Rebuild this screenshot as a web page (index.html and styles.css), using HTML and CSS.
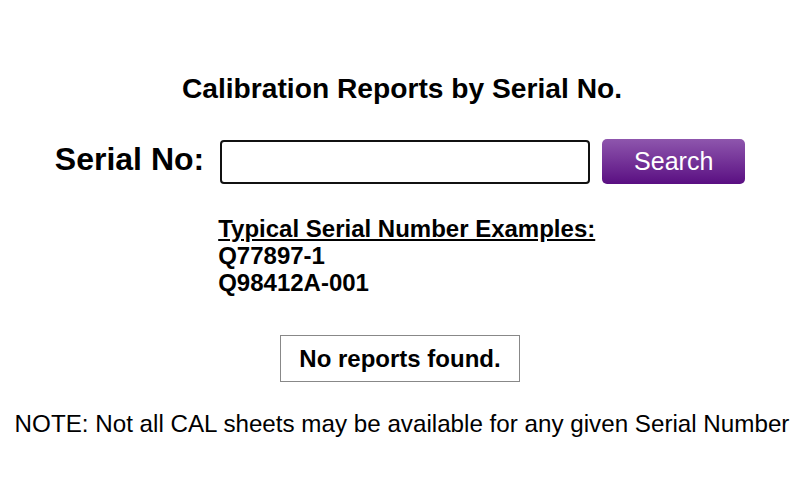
FILE: index.html
```html
<!DOCTYPE html>
<html lang="en">
<head>
  <meta charset="UTF-8">
  <meta name="viewport" content="width=device-width, initial-scale=1.0">
  <title>Calibration Reports</title>
  <link rel="stylesheet" href="styles.css">
</head>
<body>
  <h1 class="page-title">Calibration Reports by Serial No.</h1>

  <!-- Search form -->
  <form class="search-form" onsubmit="return false;">
    <label class="search-label" for="serial">Serial No:</label>
    <div class="search-controls">
      <input type="text" id="serial" class="search-input">
      <button type="submit" class="search-button">Search</button>
    </div>
    <div class="examples">
      <div class="examples-title">Typical Serial Number Examples:</div>
      <div>Q77897-1</div>
      <div>Q98412A-001</div>
    </div>
  </form>

  <!-- Results -->
  <div class="results">
    <div class="results-box">No reports found.</div>
  </div>

  <p class="note">NOTE: Not all CAL sheets may be available for any given Serial Number</p>
</body>
</html>
```

FILE: styles.css
```css
body { margin: 0; padding-top: 72px; font-family: "Liberation Sans", Arial, sans-serif; color: #000; background-color: #fff; }
.page-title { margin: 0; padding-left: 4px; font-size: 28.2px; font-weight: bold; text-align: center; line-height: 32px; }
.search-form { display: grid; grid-template-columns: auto auto; column-gap: 16px; justify-content: center; margin-top: 34px; }
.search-label { align-self: center; padding-bottom: 3px; font-size: 32px; font-weight: bold; text-align: right; }
.search-controls { display: flex; align-items: center; gap: 12px; }
.search-input { box-sizing: border-box; width: 370px; height: 44px; margin-top: 2px; padding: 0 8px; border: 2px solid #111; border-radius: 4px; font-size: 22px; font-family: inherit; }
.search-button { box-sizing: border-box; width: 143px; height: 45px; border: none; border-radius: 5px; background: linear-gradient(#8e56ad, #5a0f82); color: #fff; font-size: 25px; font-family: inherit; cursor: pointer; }
.examples { grid-column: 2; margin-top: 31px; margin-left: -2px; font-size: 24px; font-weight: bold; line-height: 27px; }
.examples-title { text-decoration: underline; }
.results { display: flex; justify-content: center; margin-top: 39px; }
.results-box { padding: 9px 18px; border: 1px solid #888; font-size: 24px; font-weight: bold; line-height: 27px; }
.note { margin: 28px 0 0; padding-left: 4px; font-size: 24.2px; text-align: center; }
```
